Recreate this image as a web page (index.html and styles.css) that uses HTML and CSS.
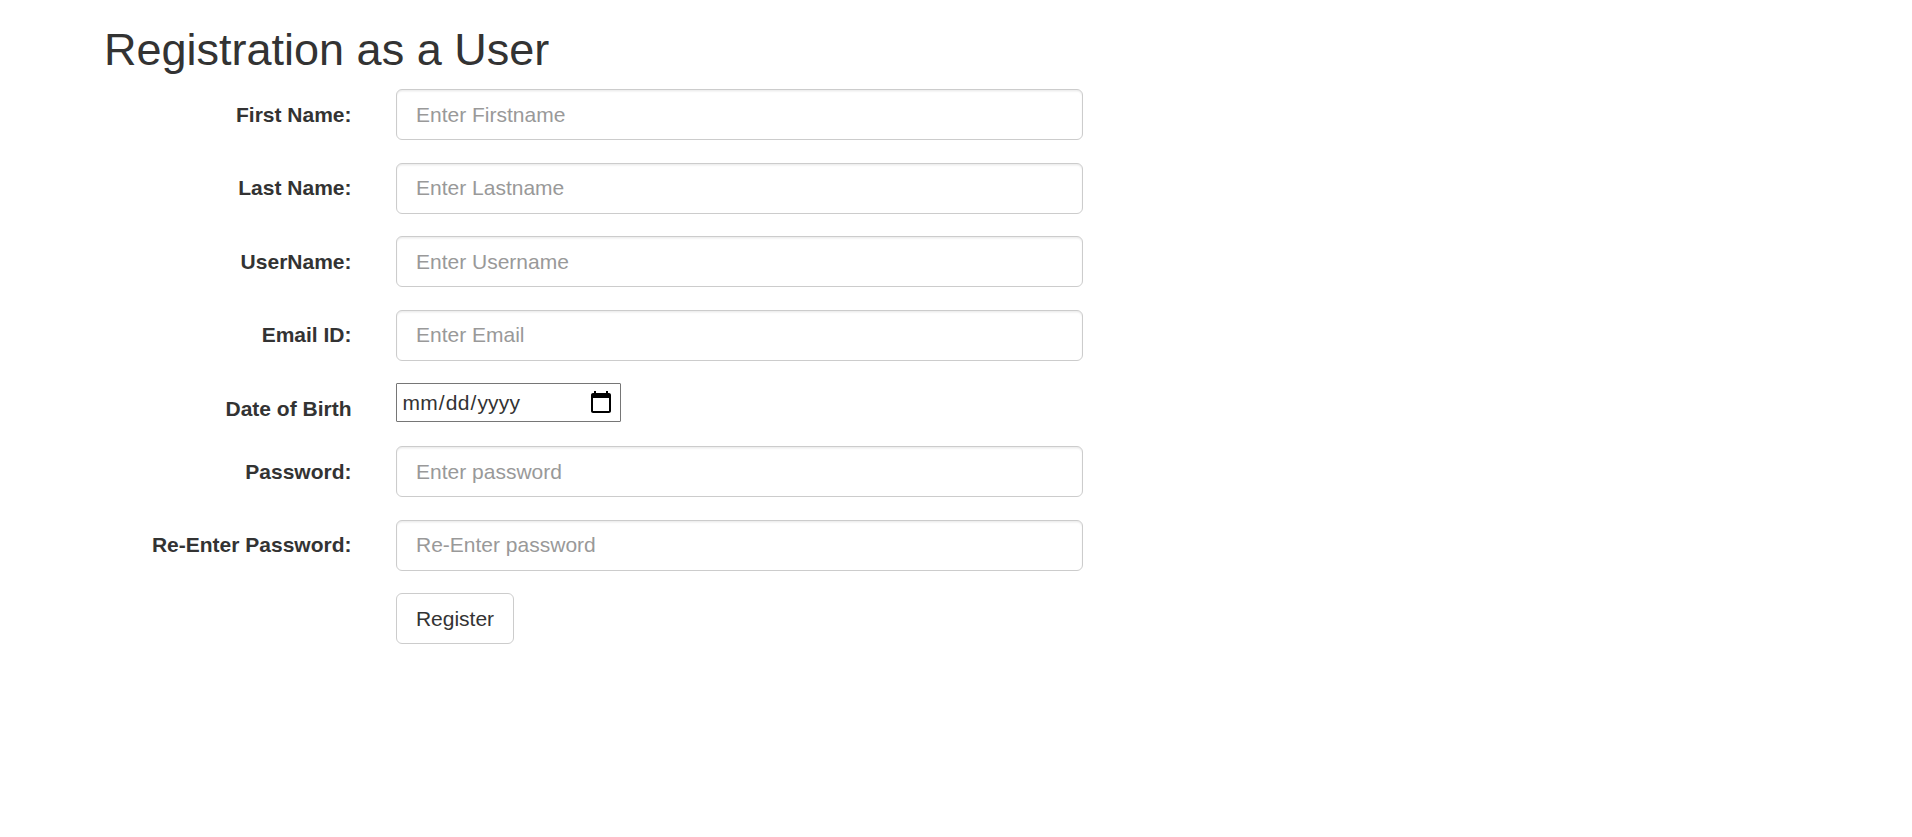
FILE: index.html
```html
<!DOCTYPE html>
<html lang="en">
<head>
    <meta charset="utf-8">
    <title>Registration</title>
    <link rel="stylesheet" href="styles.css">
</head>
<body>
    <div class="container">
        <h2>Registration as a User</h2>
        <form class="form-horizontal">
            <div class="form-group">
                <label class="control-label" for="fname">First Name:</label>
                <input type="text" class="form-control" id="fname" placeholder="Enter Firstname">
            </div>
            <div class="form-group">
                <label class="control-label" for="lname">Last Name:</label>
                <input type="text" class="form-control" id="lname" placeholder="Enter Lastname">
            </div>
            <div class="form-group">
                <label class="control-label" for="uname">UserName:</label>
                <input type="text" class="form-control" id="uname" placeholder="Enter Username">
            </div>
            <div class="form-group">
                <label class="control-label" for="email">Email ID:</label>
                <input type="email" class="form-control" id="email" placeholder="Enter Email">
            </div>
            <div class="form-group date-group">
                <label class="control-label" for="dob">Date of Birth</label>
                <input type="date" class="date-input" id="dob">
            </div>
            <div class="form-group">
                <label class="control-label" for="pwd">Password:</label>
                <input type="password" class="form-control" id="pwd" placeholder="Enter password">
            </div>
            <div class="form-group">
                <label class="control-label" for="repwd">Re-Enter Password:</label>
                <input type="password" class="form-control" id="repwd" placeholder="Re-Enter password">
            </div>
            <div class="form-group">
                <span></span>
                <button type="submit" class="btn">Register</button>
            </div>
        </form>
    </div>
</body>
</html>
```

FILE: styles.css
```css
* {
    box-sizing: border-box;
}

body {
    margin: 0;
    font-family: "Liberation Sans", Arial, sans-serif;
    font-size: 21px;
    line-height: 30px;
    color: #333;
    background-color: #fff;
}

.container {
    padding: 25px 104px 0;
}

h2 {
    margin: 0 0 15px;
    font-size: 45px;
    font-weight: 500;
    line-height: 49px;
}

.form-group {
    display: grid;
    grid-template-columns: 247.5px 687px;
    column-gap: 44.5px;
    align-items: start;
    justify-items: start;
    height: 51px;
    margin-bottom: 22.5px;
}

/* the date input is shorter than the other fields */
.date-group {
    height: 40.5px;
}

.control-label {
    justify-self: end;
    padding-top: 10.5px;
    font-weight: bold;
}

.form-control {
    width: 100%;
    height: 51px;
    padding: 9px 19px;
    font-family: inherit;
    font-size: 21px;
    line-height: 30px;
    color: #555;
    background-color: #fff;
    border: 1px solid #ccc;
    border-radius: 6px;
    box-shadow: inset 0 1.5px 1.5px rgba(0, 0, 0, 0.075);
}

.form-control::placeholder {
    color: #999;
    opacity: 1;
}

.date-input {
    width: 225px;
    height: 39px;
    padding: 1px 4.5px;
    font-family: inherit;
    font-size: 21px;
    line-height: 30px;
    letter-spacing: 0.15px;
    color: #333;
    background-color: #fff;
    border: 1px solid #767676;
    border-radius: 1px;
}

.date-input::-webkit-calendar-picker-indicator {
    width: 26px;
    height: 26px;
    padding: 2px;
}

.btn {
    width: 118px;
    height: 51px;
    padding: 9px 0;
    font-family: inherit;
    font-size: 21px;
    line-height: 30px;
    color: #333;
    background-color: #fff;
    border: 1px solid #ccc;
    border-radius: 6px;
}
```
